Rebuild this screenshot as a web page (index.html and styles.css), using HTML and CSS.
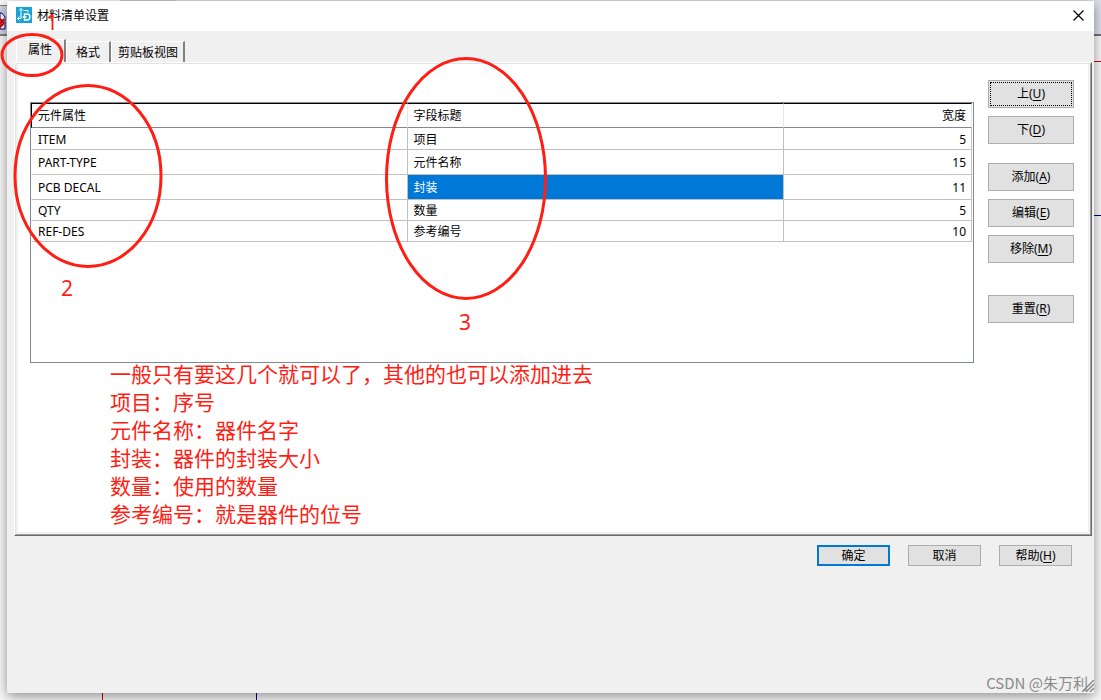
FILE: index.html
```html
<!DOCTYPE html>
<html lang="zh-CN">
<head>
  <meta charset="UTF-8">
  <meta name="viewport" content="width=device-width, initial-scale=1.0">
  <title>材料清单设置</title>
  <link rel="stylesheet" href="styles.css">
</head>
<body>
  <!-- drawing program behind the dialog -->
  <svg class="backdrop" aria-hidden="true">
    <rect x="120" y="0" width="56" height="4" fill="#c9cad2"/>
    <rect x="176" y="0" width="100%" height="4" fill="#dfe1ee"/>
    <rect x="50%" y="0" width="50%" height="34" fill="#dfe1ee"/>
    <rect x="50%" y="34" width="50%" height="2" fill="#707070"/>
    <rect x="50%" y="61" width="50%" height="1" fill="#d40000"/>
    <rect x="50%" y="215" width="50%" height="1" fill="#000080"/>
    <rect x="0" y="5" width="8" height="31" fill="#808080"/>
    <rect x="0" y="6" width="8" height="28" fill="#d3d3e2"/>
    <path d="M0 13h2l3 4v12H0z" fill="#fff" stroke="#000080"/>
    <path d="M0 19l4 4M4 19l-4 5M0 27l4-4" stroke="#d40000" stroke-width="2"/>
    <rect x="102" y="600" width="1" height="100%" fill="#d40000"/>
    <rect x="256" y="600" width="1" height="100%" fill="#000080"/>
  </svg>

  <div class="window">
    <header class="title-bar">
      <svg class="app-icon" width="16" height="16" viewBox="0 0 16 16" aria-hidden="true">
        <rect width="16" height="16" fill="#16a4d6"/>
        <path d="M5 1.500v10H1.500M3 3.500l2-2 2 2M3.500 9.500l-2 2 2 2" fill="none" stroke="#fff"/>
        <path d="M8.500 7H11a3 3 0 0 1 0 6H8.500zM6.500 10h4" fill="none" stroke="#fff" stroke-width="1.400"/>
        <path d="M7.500 3.500H12v2" fill="none" stroke="#fff"/>
      </svg>
      <h1>材料清单设置</h1>
      <button class="close" type="button" aria-label="关闭">
        <svg width="11" height="11" viewBox="0 0 11 11"><path d="M.5.5l10 10M10.500.5l-10 10" stroke="#000" stroke-width="1.200"/></svg>
      </button>
    </header>

    <nav class="tabs">
      <button class="tab active" type="button">属性</button>
      <button class="tab" type="button">格式</button>
      <button class="tab" type="button">剪贴板视图</button>
    </nav>

    <main class="panel">
      <div class="page">
        <div class="columns">
          <div class="list">
            <table>
              <colgroup>
                <col class="col-wide">
                <col class="col-wide">
                <col class="col-width">
              </colgroup>
              <thead>
                <tr><th>元件属性</th><th>字段标题</th><th class="num">宽度</th></tr>
              </thead>
              <tbody>
                <tr class="medium"><td>ITEM</td><td>项目</td><td class="num">5</td></tr>
                <tr class="tall"><td>PART-TYPE</td><td>元件名称</td><td class="num">15</td></tr>
                <tr class="tall"><td>PCB DECAL</td><td class="selected">封装</td><td class="num">11</td></tr>
                <tr><td>QTY</td><td>数量</td><td class="num">5</td></tr>
                <tr><td>REF-DES</td><td>参考编号</td><td class="num">10</td></tr>
              </tbody>
            </table>
          </div>
          <div class="actions">
            <div class="group">
              <button class="focused" type="button">上(<u>U</u>)</button>
              <button type="button">下(<u>D</u>)</button>
            </div>
            <div class="group">
              <button type="button">添加(<u>A</u>)</button>
              <button type="button">编辑(<u>E</u>)</button>
              <button type="button">移除(<u>M</u>)</button>
            </div>
            <div class="group reset">
              <button type="button">重置(<u>R</u>)</button>
            </div>
          </div>
        </div>
        <div class="notes">
          <p>一般只有要这几个就可以了，其他的也可以添加进去</p>
          <p>项目：序号</p>
          <p>元件名称：器件名字</p>
          <p>封装：器件的封装大小</p>
          <p>数量：使用的数量</p>
          <p>参考编号：就是器件的位号</p>
        </div>
      </div>
    </main>

    <footer class="dialog-buttons">
      <button class="default" type="button">确定</button>
      <button type="button">取消</button>
      <button type="button">帮助(<u>H</u>)</button>
    </footer>

    <svg class="grip" width="12" height="12" aria-hidden="true">
      <path d="M0 12L12 0M4 12l8-8M8 12l4-4" stroke="#8c8c8c" stroke-width="1.500"/>
    </svg>
    <span class="watermark">CSDN @朱万利</span>
  </div>

  <!-- red pen marks -->
  <svg class="marks">
    <ellipse cx="32" cy="55" rx="30" ry="20.500"/>
    <ellipse cx="88" cy="176" rx="73" ry="90.500"/>
    <ellipse cx="466" cy="178.500" rx="79.500" ry="120"/>
    <text x="46" y="30">1</text>
    <text x="61" y="296">2</text>
    <text x="459" y="330">3</text>
  </svg>
</body>
</html>
```

FILE: styles.css
```css
* {
  box-sizing: border-box;
}

body {
  margin: 0;
  padding: 1px 7px 7px;
  min-height: 100vh;
  display: flex;
  position: relative;
  overflow: hidden;
  background: #fafafa;
  color: #000;
  font-family: "Noto Sans", "Noto Sans CJK SC", sans-serif;
  font-size: 12px;
  line-height: 16px;
}

button {
  padding: 0;
  border: 1px solid #adadad;
  background: #e1e1e1;
  color: #000;
  font: inherit;
}

u {
  text-underline-offset: 2px;
}

.backdrop {
  position: absolute;
  left: 0;
  top: 0;
  width: 100%;
  height: 100%;
}

.window {
  flex: 1;
  min-width: 0;
  position: relative;
  display: flex;
  flex-direction: column;
  background: #f0f0f0;
  box-shadow: 0 3px 12px rgba(0, 0, 0, 0.45);
}

/* title bar */
.title-bar {
  display: flex;
  align-items: center;
  height: 30px;
  padding: 0 10px 2px 9px;
  background: #fff;
}

.title-bar h1 {
  flex: 1;
  margin: 2px 0 0 5px;
  font-size: 12px;
  font-weight: normal;
}

.close {
  display: flex;
  border: none;
  background: none;
}

/* tabs */
.tabs {
  display: flex;
  align-items: flex-end;
  height: 31px;
  padding-left: 9px;
}

.tab {
  height: 21px;
  padding: 1px 6px 0;
  border: 1px solid #fff;
  border-right: 2px solid #808080;
  border-bottom: none;
  background: #f0f0f0;
}

.tab + .tab {
  padding: 1px 9px 0;
}

.tab + .tab + .tab {
  padding: 1px 5px 0 6px;
}

.tab.active {
  height: 23px;
  padding: 0 12px 2px 11px;
}

/* sheet with the sunken edge */
.panel {
  margin: 0 2px 0 7px;
  border: 1px solid;
  border-color: #fff #696969 #696969 #fff;
}

.page {
  border: 1px solid;
  border-color: #e3e3e3 #a0a0a0 #a0a0a0 #e3e3e3;
  padding: 16px 16px 7px 14px;
  background: #fff;
  box-shadow: inset 2px 0 #f0f0f0, inset -2px -2px #f0f0f0;
}

.columns {
  display: flex;
  gap: 14px;
}

.list {
  flex: 1;
  height: 261px;
  margin-top: 22px;
  padding-right: 1px;
  border: 1px solid #828790;
}

table {
  width: 100%;
  table-layout: fixed;
  border-collapse: separate;
  border-spacing: 0;
}

.col-width {
  width: 188px;
}

th,
td {
  padding: 0 6px;
  text-align: left;
  font-weight: normal;
}

th {
  height: 25px;
  border-top: 1px solid #000;
  border-right: 1px solid #e5e5e5;
  border-bottom: 1px solid #828790;
}

th:first-child {
  border-left: 1px solid #000;
}

td {
  height: 21px;
  padding-top: 2px;
  border-right: 1px solid #c0c0c0;
  border-bottom: 1px solid #c0c0c0;
}

td:first-child {
  border-left: 1px solid #fff;
}

.medium td {
  height: 22px;
}

.tall td {
  height: 25px;
}

.num {
  padding-right: 5px;
  text-align: right;
}

td.selected {
  background: #0078d7;
  color: #fff;
}

.actions {
  display: flex;
  flex-direction: column;
  gap: 19px;
  width: 86px;
}

.group {
  display: flex;
  flex-direction: column;
  gap: 8px;
}

.group button {
  height: 28px;
}

.reset {
  margin-top: 13px;
}

.focused {
  outline: 1px dotted #000;
  outline-offset: -3px;
}

/* red notes under the list */
.notes {
  margin: -4px 0 0 80px;
  color: #ff1e14;
  font-family: "Noto Sans CJK SC", sans-serif;
  font-size: 21px;
  line-height: 28px;
}

.notes p {
  margin: 0;
}

.dialog-buttons {
  display: flex;
  justify-content: flex-end;
  gap: 18px;
  padding: 9px 22px;
}

.dialog-buttons button {
  width: 73px;
  height: 21px;
  line-height: 18px;
}

.dialog-buttons .default {
  border: 2px solid #0078d7;
}

.grip {
  position: absolute;
  right: 0;
  bottom: 1px;
}

.watermark {
  position: absolute;
  right: 6px;
  bottom: 0;
  color: #8a8a8a;
  font-family: "Noto Sans CJK SC", sans-serif;
  font-size: 15px;
  line-height: 20px;
}

.marks {
  position: absolute;
  left: 0;
  top: 0;
  width: 100%;
  height: 100%;
  pointer-events: none;
}

.marks ellipse {
  fill: none;
  stroke: #ff1e14;
  stroke-width: 3px;
}

.marks text {
  fill: #ff1e14;
  font-size: 21px;
}
```
